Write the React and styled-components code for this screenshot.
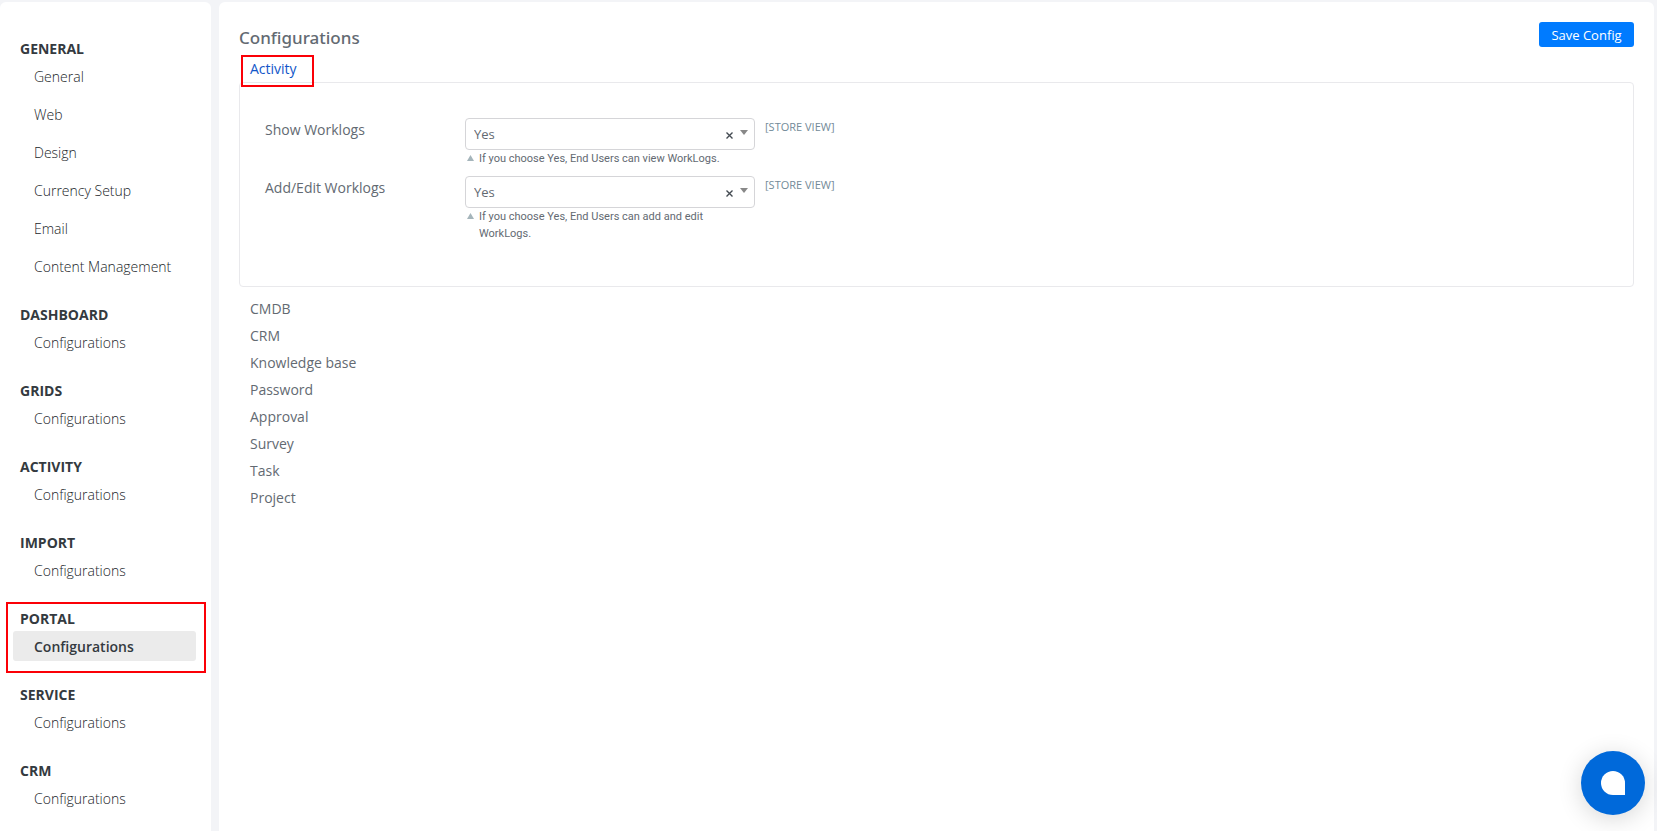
import React, { useState } from "react";
import styled, { createGlobalStyle } from "styled-components";

const GlobalStyle = createGlobalStyle`
  *, *::before, *::after { box-sizing: border-box; }
  body {
    margin: 0;
    background: #f3f4f7;
    color: #636a72;
    font-family: "Open Sans", "Noto Sans", sans-serif;
    font-size: 14px;
    line-height: 20px;
  }
  button, select { font: inherit; color: inherit; }
`;

const Page = styled.div`
  display: flex;
  gap: 8px;
  min-height: 100vh;
  padding: 2px 3px 0 0;
`;

const Sidebar = styled.nav`
  flex: 0 0 211px;
  padding: 37px 15px 12px 13px;
  background: #fff;
  border-radius: 6px 6px 0 0;
`;

const Group = styled.section`
  position: relative;
  margin-bottom: 18px;
`;

const GroupTitle = styled.h2`
  margin: 0 0 2px;
  padding-left: 7px;
  color: #343a40;
  font-size: 14px;
  font-weight: 700;
  line-height: 20px;
  text-transform: uppercase;
`;

const NavList = styled.ul`
  display: flex;
  flex-direction: column;
  gap: 8px;
  margin: 0;
  padding: 0 0 6px;
  list-style: none;
`;

const NavLink = styled.a`
  display: block;
  padding: 2px 21px 0;
  border-radius: 3px;
  background: ${(p) => (p.$active ? "#ebebeb" : "transparent")};
  color: ${(p) => (p.$active ? "#343a40" : "#212529")};
  font-weight: ${(p) => (p.$active ? 600 : 300)};
  line-height: 28px;
  text-decoration: none;
`;

const Highlight = styled.span`
  position: absolute;
  inset: ${(p) => p.$inset};
  border: 2px solid #fb0007;
  pointer-events: none;
`;

const Main = styled.main`
  flex: 1;
  min-width: 0;
  padding: 20px;
  background: #fff;
  border-radius: 6px 6px 0 0;
`;

const Header = styled.header`
  display: flex;
  justify-content: space-between;
  align-items: flex-start;
  height: 33px;
`;

const Title = styled.h1`
  margin: 4px 0 0;
  font-family: "Noto Sans", "Open Sans", sans-serif;
  font-size: 17px;
  font-weight: 500;
  line-height: 24px;
`;

const SaveButton = styled.button`
  width: 95px;
  height: 25px;
  padding: 1px 0 0;
  border: 0;
  border-radius: 3px;
  background: #007bff;
  color: #fff;
  font-size: 13px;
  cursor: pointer;
`;

const SectionButton = styled.button`
  display: block;
  position: relative;
  height: 27px;
  padding: 0 11px;
  border: 0;
  background: none;
  color: ${(p) => (p.$open ? "#1156c9" : "inherit")};
  cursor: pointer;
`;

const Panel = styled.section`
  min-height: 205px;
  margin-bottom: 8px;
  padding: 35px 25px;
  border: 1px solid #e9e9ec;
  border-radius: 4px;
`;

const Field = styled.div`
  display: grid;
  grid-template-columns: 190px 290px 1fr;
  column-gap: 10px;
  margin-bottom: 9px;
`;

const FieldLabel = styled.label`
  padding-top: 2px;
`;

const SelectBox = styled.div`
  position: relative;
`;

const Select = styled.select`
  display: block;
  width: 100%;
  height: 32px;
  padding: 0 48px 0 8px;
  border: 1px solid #d5d5d8;
  border-radius: 4px;
  background: #fff;
  font-size: 13px;
  appearance: none;
`;

const ClearButton = styled.button`
  position: absolute;
  top: 12px;
  right: 20px;
  display: flex;
  padding: 2px;
  border: 0;
  background: none;
  cursor: pointer;
`;

const Caret = styled.svg`
  position: absolute;
  top: 12px;
  right: 7px;
  pointer-events: none;
`;

const Hint = styled.p`
  display: flex;
  gap: 5px;
  margin: 0;
  padding: 0 24px 0 2px;
  font-family: Roboto, sans-serif;
  font-size: 11px;
  line-height: 17px;

  svg { flex: none; margin-top: 5px; }
`;

const Scope = styled.span`
  color: #738a98;
  font-size: 11px;
  line-height: 17px;
`;

const ChatButton = styled.button`
  position: fixed;
  right: 12px;
  bottom: 16px;
  display: grid;
  place-items: center;
  width: 64px;
  height: 64px;
  padding: 0;
  border: 0;
  border-radius: 50%;
  background: #0069da;
  box-shadow: 0 4px 24px rgba(0, 0, 0, 0.16);
  cursor: pointer;
`;

const ChatMark = styled.span`
  width: 24px;
  height: 24px;
  border-radius: 50% 50% 0 50%;
  background: #fff;
`;

const groups = [
  { title: "General", items: ["General", "Web", "Design", "Currency Setup", "Email", "Content Management"] },
  { title: "Dashboard", items: ["Configurations"] },
  { title: "Grids", items: ["Configurations"] },
  { title: "Activity", items: ["Configurations"] },
  { title: "Import", items: ["Configurations"] },
  { title: "Portal", items: ["Configurations"], active: true },
  { title: "Service", items: ["Configurations"] },
  { title: "CRM", items: ["Configurations"] },
];

const sections = ["CMDB", "CRM", "Knowledge base", "Password", "Approval", "Survey", "Task", "Project"];

const fields = [
  { id: "show-worklogs", label: "Show Worklogs", hint: "If you choose Yes, End Users can view WorkLogs." },
  { id: "edit-worklogs", label: "Add/Edit Worklogs", hint: "If you choose Yes, End Users can add and edit WorkLogs." },
];

function ConfigField({ id, label, hint }) {
  const [value, setValue] = useState("Yes");
  return (
    <Field>
      <FieldLabel htmlFor={id}>{label}</FieldLabel>
      <div>
        <SelectBox>
          <Select id={id} value={value} onChange={(e) => setValue(e.target.value)}>
            <option value=""></option>
            <option>Yes</option>
            <option>No</option>
          </Select>
          <ClearButton type="button" aria-label={`Clear ${label}`} onClick={() => setValue("")}>
            <svg width="7" height="7" viewBox="0 0 7 7" stroke="#444b52" strokeWidth="1.4">
              <path d="M.5.5l6 6M6.5.5l-6 6" />
            </svg>
          </ClearButton>
          <Caret width="8" height="5" viewBox="0 0 8 5" fill="#888">
            <path d="M0 0h8L4 5z" />
          </Caret>
        </SelectBox>
        <Hint>
          <svg width="7" height="6" viewBox="0 0 7 6" fill="#a5b5bb">
            <path d="M3.5 0L7 6H0z" />
          </svg>
          {hint}
        </Hint>
      </div>
      <Scope>[STORE VIEW]</Scope>
    </Field>
  );
}

export default function App() {
  return (
    <>
      <GlobalStyle />
      <Page>
        <Sidebar aria-label="Settings">
          {groups.map((group) => (
            <Group key={group.title}>
              <GroupTitle>{group.title}</GroupTitle>
              <NavList>
                {group.items.map((item) => (
                  <li key={item}>
                    <NavLink href="#" $active={group.active}>{item}</NavLink>
                  </li>
                ))}
              </NavList>
              {group.active && <Highlight $inset="-7px -10px -6px -7px" />}
            </Group>
          ))}
        </Sidebar>
        <Main>
          <Header>
            <Title>Configurations</Title>
            <SaveButton type="button">Save Config</SaveButton>
          </Header>
          <SectionButton type="button" aria-expanded="true" $open>
            Activity
            <Highlight $inset="0 -6px -5px 2px" />
          </SectionButton>
          <Panel>
            {fields.map((field) => (
              <ConfigField key={field.id} {...field} />
            ))}
          </Panel>
          {sections.map((name) => (
            <SectionButton key={name} type="button" aria-expanded="false">{name}</SectionButton>
          ))}
        </Main>
      </Page>
      <ChatButton type="button" aria-label="Open chat">
        <ChatMark />
      </ChatButton>
    </>
  );
}
